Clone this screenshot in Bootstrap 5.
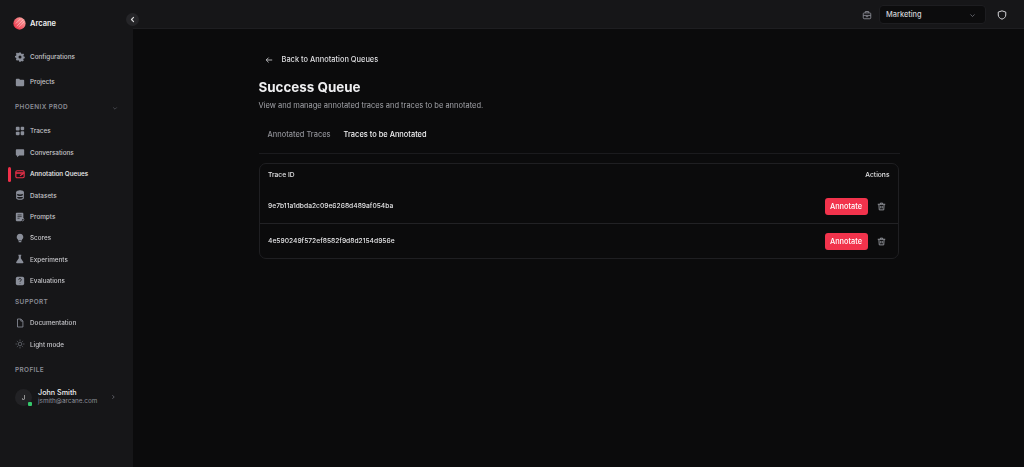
<!DOCTYPE html>
<html lang="en"><head><meta charset="utf-8"><title>Success Queue</title>
<link href="https://cdn.jsdelivr.net/npm/bootstrap@5.3.0/dist/css/bootstrap.min.css" rel="stylesheet">
<style>
html,body{height:100%;margin:0;background:#0b0b0c;overflow:hidden}
body{font-family:Inter,"Liberation Sans",sans-serif;font-size:7px;color:#e8e8ea}
.shell{height:467px;width:1024px;filter:blur(.25px)}
.side{width:133px;flex:none;background:#161618;position:relative}
.logo-row{height:17px;margin-top:15px;padding-left:13px;gap:4px;font-size:7.5px;font-weight:600;color:#f1f1f3}
.side-group{padding-left:15px;margin-top:13px}
.s-item{height:21.35px;gap:5px;color:#c6c6ca;font-size:6.35px;font-weight:500;position:relative}
.s-item svg{width:10px;height:10px;flex:none;margin-top:-2px}
.s-item.tall{height:25px}
.s-item.trc{height:21.5px}
.s-item.on{color:#f4f4f5}
.s-bar{position:absolute;left:-7px;top:3px;width:2.5px;height:15px;background:#f0304a;border-radius:2px}
.s-head{height:21px;font-size:6.4px;font-weight:600;letter-spacing:.4px;color:#8b8d96;padding-right:15px}
.s-head.ph{height:26.5px}
.s-head.pf{height:27px;margin-top:1px}
.s-head svg{width:6px;height:6px}
.avatar{width:17px;height:17px;border-radius:50%;background:#222225;position:relative;font-size:6px;color:#ddd;flex:none}
.dot{position:absolute;right:0;bottom:0;width:4px;height:4px;background:#35c76b;border-radius:1px}
.prof{height:27px;gap:6px;padding-right:17px;margin-top:-.5px}
.p-name{font-size:7.2px;font-weight:500;color:#efeff1;line-height:9px}
.p-mail{font-size:6.35px;color:#8e9098;line-height:9px}
.collapse-btn{position:absolute;right:-6px;top:13px;width:13px;height:13px;border-radius:50%;background:#252528;z-index:2}
.collapse-btn svg{width:7px;height:7px}
.top{height:29px;background:#161618;border-bottom:1px solid #1e1e21;padding-right:17.5px;padding-top:1px}
.picker{width:107px;height:19px;background:#0c0c0d;border:1px solid #1d1d20;border-radius:4px;padding:1px 9px 0 6px;font-size:7.4px;font-weight:500;color:#d3d4d8;margin:0 10.5px 0 7px}
.main-wrap{width:641px;margin-left:125.5px;padding-top:24px}
.back{height:14px;gap:9px;padding-left:6px;font-size:7.45px;font-weight:500;color:#dfdfe2}
.ttl{font-size:13.4px;font-weight:700;color:#eeeef0;line-height:18px;margin:11px 0 0}
.sub{font-size:7.5px;color:#a3a4aa;margin:5px 0 0;line-height:10px}
.tabs-row{height:37px;margin-top:6px;border-bottom:1px solid #1b1b1e;gap:13px;padding:0 9px;font-size:7.45px;font-weight:500;color:#8f9096}
.tabs-row .act{color:#f1f1f3}
.tbl{border:1px solid #1f1f22;border-radius:7px;margin-top:9px;width:640.500px}
.t-row{padding:0 9px 0 8.5px;font-size:6.7px;font-weight:500;color:#e4e4e6}
.t-head{height:25px;padding:0 8.500px 2px 8.500px}
.t-body{height:34px;padding-top:1px}
.t-body+.t-body{border-top:1px solid #222225;height:35px;padding-top:1px}
.act-btn{width:43px;height:17px;background:#f2334c;color:#fff;border:0;border-radius:3px;padding:0;font-size:7.4px;font-weight:500;line-height:17px}
.trash{width:9px;height:9px;margin:0 3px 0 9.5px}
</style></head>
<body>
<div class="shell d-flex">
<aside class="side">
<div class="collapse-btn d-flex align-items-center justify-content-center"><svg viewBox="0 0 10 10" fill="none" stroke="#ddd" stroke-width="1.6" stroke-linecap="round" stroke-linejoin="round"><path d="M6.5 2 3.5 5l3 3"/></svg></div>
<div class="logo-row d-flex align-items-center">
<svg width="13" height="13" viewBox="0 0 14 14"><defs><linearGradient id="lg" x1="0" y1="1" x2="1" y2="0"><stop offset="0" stop-color="#e8233c"/><stop offset="1" stop-color="#ffb3ac"/></linearGradient></defs><circle cx="7" cy="7" r="6.6" fill="url(#lg)"/><path d="M4 10 11 3M6 11l6-6M3 7l5-5" stroke="#fff" stroke-opacity=".55" stroke-width=".8"/></svg>
<span>Arcane</span></div>
<div class="side-group">
<div class="s-item tall d-flex align-items-center"><svg viewBox="0 0 12 12" fill="#8a8e99"><path d="M5 .6h2l.3 1.300 1.200.5 1.200-.7 1.200 1.400-.8 1.100.3 1.200 1.300.4v1.600l-1.300.4-.5 1.200.7 1.100-1.400 1.400-1.100-.7-1.200.5L7 11.600H5l-.3-1.300-1.200-.5-1.100.7-1.400-1.400.7-1.100-.5-1.200L0 6.400V4.800l1.300-.4.4-1.200L1 2.100 2.400.7l1.100.7 1.200-.5z"/><circle cx="6" cy="6" r="1.800" fill="#161618"/></svg>Configurations</div>
<div class="s-item tall d-flex align-items-center"><svg viewBox="0 0 12 12" fill="#8a8e99"><path d="M1 3a1 1 0 0 1 1-1h3l1 1.300h4a1 1 0 0 1 1 1V10a1 1 0 0 1-1 1H2a1 1 0 0 1-1-1z"/></svg>Projects</div>
<div class="s-head ph d-flex align-items-center justify-content-between"><span>PHOENIX PROD</span><svg viewBox="0 0 10 10" fill="none" stroke="#55575e" stroke-width="1.2"><path d="m2 4 3 3 3-3"/></svg></div>
<div class="s-item trc d-flex align-items-center"><svg viewBox="0 0 12 12" fill="#8a8e99"><rect x="1" y="1" width="4.500" height="4.500" rx="1"/><rect x="6.800" y="1" width="4.200" height="4" rx="1"/><rect x="1" y="6.800" width="4.500" height="4.200" rx="1"/><rect x="6.800" y="6.300" width="4.200" height="4.700" rx="1"/></svg>Traces</div>
<div class="s-item d-flex align-items-center"><svg viewBox="0 0 12 12" fill="#8a8e99"><path d="M2 1.500h8a1 1 0 0 1 1 1V8a1 1 0 0 1-1 1H5L2.500 11V9H2a1 1 0 0 1-1-1V2.500a1 1 0 0 1 1-1z"/></svg>Conversations</div>
<div class="s-item on d-flex align-items-center"><span class="s-bar"></span><svg viewBox="0 0 12 12" fill="none" stroke="#f0304a" stroke-width="1.300"><rect x="1" y="2" width="10" height="8.500" rx="1.500"/><path d="M1 4.800h10" stroke-width="1.800"/><path d="m6 8 4-2.500" stroke-width="1.500"/></svg>Annotation Queues</div>
<div class="s-item d-flex align-items-center"><svg viewBox="0 0 12 12" fill="none" stroke="#8a8e99" stroke-width="1.300"><ellipse cx="6" cy="2.800" rx="4" ry="1.800" fill="#8a8e99"/><path d="M2 2.800v6.400c0 1 1.800 1.800 4 1.800s4-.8 4-1.800V2.800M2 6c0 1 1.800 1.800 4 1.800S10 7 10 6"/></svg>Datasets</div>
<div class="s-item d-flex align-items-center"><svg viewBox="0 0 12 12" fill="#8a8e99"><path d="M2 1h7a1 1 0 0 1 1 1v5.500L7 11H2a1 1 0 0 1-1-1V2a1 1 0 0 1 1-1z"/><path d="M3 3.500h5M3 5.500h5M3 7.500h2.500" stroke="#161618" stroke-width=".8"/><circle cx="9" cy="9" r="1.600" fill="none" stroke="#8a8e99"/></svg>Prompts</div>
<div class="s-item d-flex align-items-center"><svg viewBox="0 0 12 12" fill="#8a8e99"><path d="M6 .8a4 4 0 0 1 2.400 7.200V9H3.600V8A4 4 0 0 1 6 .8z"/><rect x="4.300" y="9.700" width="3.400" height="1.400" rx=".6"/></svg>Scores</div>
<div class="s-item d-flex align-items-center"><svg viewBox="0 0 12 12" fill="#8a8e99"><path d="M4 1h3.500v1H7v3l3 4.600c.4.700 0 1.400-.8 1.400H2.300c-.8 0-1.200-.7-.8-1.400L4.500 5V2H4z"/></svg>Experiments</div>
<div class="s-item d-flex align-items-center"><svg viewBox="0 0 12 12" fill="#8a8e99"><rect x="1" y="1" width="10" height="10" rx="2"/><path d="M4.500 4.500a1.500 1.500 0 1 1 2.200 1.300c-.5.300-.7.600-.7 1.200M6 8.500v.6" fill="none" stroke="#161618" stroke-width="1"/></svg>Evaluations</div>
<div class="s-head d-flex align-items-center">SUPPORT</div>
<div class="s-item d-flex align-items-center"><svg viewBox="0 0 12 12" fill="none" stroke="#8a8e99" stroke-width="1"><path d="M3 1.200h4L9.500 3.700v7.100H3z"/><path d="M7 1.200v2.500h2.500"/></svg>Documentation</div>
<div class="s-item d-flex align-items-center"><svg viewBox="0 0 12 12" fill="none" stroke="#70737c" stroke-width=".9"><circle cx="6" cy="6" r="2.200"/><path d="M6 .7v1.500M6 9.800v1.500M.7 6h1.500M9.800 6h1.500M2.300 2.300l1 1M8.700 8.700l1 1M2.300 9.700l1-1M8.700 3.300l1-1"/></svg>Light mode</div>
<div class="s-head pf d-flex align-items-center">PROFILE</div>
<div class="prof d-flex align-items-center">
<div class="avatar d-flex align-items-center justify-content-center">J<span class="dot"></span></div>
<div class="flex-grow-1"><div class="p-name">John Smith</div><div class="p-mail">jsmith@arcane.com</div></div>
<svg width="6" height="6" viewBox="0 0 10 10" fill="none" stroke="#6d6f77" stroke-width="1.300"><path d="m4 2 3 3-3 3"/></svg>
</div>
</div>
</aside>
<div class="flex-grow-1 d-flex flex-column">
<header class="top d-flex align-items-center justify-content-end">
<svg width="10" height="10" viewBox="0 0 12 12" fill="none" stroke="#85878f" stroke-width="1.100"><rect x="1.500" y="3.500" width="9" height="7" rx="1"/><path d="M4 3.500V1.800h4v1.700M1.500 6.500h9M4.500 8h3"/></svg>
<div class="picker d-flex align-items-center justify-content-between"><span>Marketing</span><svg width="7" height="7" viewBox="0 0 10 10" fill="none" stroke="#75777f" stroke-width="1.100"><path d="m2 3.500 3 3 3-3"/></svg></div>
<svg width="10" height="10" viewBox="0 0 12 12" fill="none" stroke="#d5d5d8" stroke-width="1.200"><path d="M6 1 10.500 2.500V6c0 2.500-2 4.200-4.500 5C3.500 10.200 1.500 8.500 1.500 6V2.500z"/></svg>
</header>
<main class="main-wrap">
<div class="back d-flex align-items-center"><svg width="8" height="8" viewBox="0 0 10 10" fill="none" stroke="#d8d8db" stroke-width="1"><path d="M9 5H1.500M4.500 2 1.500 5l3 3"/></svg><span>Back to Annotation Queues</span></div>
<h1 class="ttl">Success Queue</h1>
<p class="sub">View and manage annotated traces and traces to be annotated.</p>
<div class="tabs-row d-flex align-items-center"><span>Annotated Traces</span><span class="act">Traces to be Annotated</span></div>
<div class="tbl">
<div class="t-row t-head d-flex align-items-center justify-content-between"><span>Trace ID</span><span>Actions</span></div>
<div class="t-row t-body d-flex align-items-center justify-content-between"><span>9e7b11a1dbda2c09e6268d489af054ba</span><div class="d-flex align-items-center"><button class="act-btn btn" type="button">Annotate</button><svg class="trash" viewBox="0 0 12 12" fill="none" stroke="#9a9ca3" stroke-width="1.200"><path d="M1 3h10M4.500 3V1.500h3V3M2.500 3l.5 7.500h6l.5-7.500M5 5.200v3.300M7 5.200v3.300"/></svg></div></div>
<div class="t-row t-body d-flex align-items-center justify-content-between"><span>4e590249f572ef8582f9d8d2154d956e</span><div class="d-flex align-items-center"><button class="act-btn btn" type="button">Annotate</button><svg class="trash" viewBox="0 0 12 12" fill="none" stroke="#9a9ca3" stroke-width="1.200"><path d="M1 3h10M4.500 3V1.500h3V3M2.500 3l.5 7.500h6l.5-7.500M5 5.200v3.300M7 5.200v3.300"/></svg></div></div>
</div>
</main>
</div>
</div>
<script src="https://cdn.jsdelivr.net/npm/bootstrap@5.3.0/dist/js/bootstrap.bundle.min.js"></script>
</body></html>
